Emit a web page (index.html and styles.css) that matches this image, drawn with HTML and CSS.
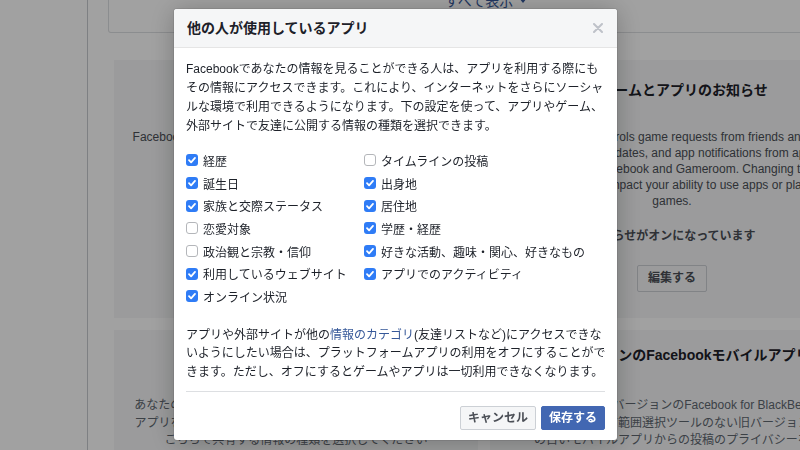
FILE: index.html
```html
<!DOCTYPE html>
<html lang="ja">
<head>
<meta charset="utf-8">
<title>他の人が使用しているアプリ</title>
<link rel="stylesheet" href="styles.css">
</head>
<body>
<div class="page">
  <aside class="sidebar"></aside>
  <main class="main">
    <div class="topbox">
      <a class="showall" href="#">すべて表示
        <svg class="caret" width="8" height="6" viewBox="0 0 8 6"><path d="M0 0h8L4 5z" fill="currentColor"/></svg>
      </a>
    </div>
    <div class="grid">
      <section class="card">
        <h2 class="card-title">
          <svg class="card-icon" width="18" height="18" viewBox="0 0 24 24"><path fill="currentColor" d="M19.14 12.94c.04-.3.06-.61.06-.94 0-.32-.02-.64-.07-.94l2.030-1.58a.49.49 0 0 0 .12-.61l-1.92-3.32a.49.49 0 0 0-.59-.22l-2.39.96c-.5-.38-1.03-.7-1.62-.94l-.36-2.54a.48.48 0 0 0-.48-.41h-3.84c-.24 0-.43.17-.47.41l-.36 2.54c-.59.24-1.13.57-1.62.94l-2.39-.96c-.22-.08-.47 0-.59.22L2.74 8.87c-.12.21-.08.47.12.61l2.03 1.58c-.05.3-.09.63-.09.94s.02.64.07.94l-2.03 1.58a.49.49 0 0 0-.12.61l1.92 3.32c.12.22.37.29.59.22l2.39-.96c.5.38 1.03.7 1.62.94l.36 2.54c.05.24.24.41.48.41h3.84c.24 0 .44-.17.47-.41l.36-2.54c.59-.24 1.13-.56 1.62-.94l2.39.96c.22.08.47 0 .59-.22l1.92-3.32c.12-.22.07-.47-.12-.61l-2.01-1.58zM12 15.6c-1.98 0-3.6-1.62-3.6-3.6s1.62-3.6 3.6-3.6 3.6 1.62 3.6 3.6-1.62 3.6-3.6 3.6z"/></svg>
          アプリ、ウェブサイト、プラグイン
        </h2>
        <p class="card-text">Facebookを使ってログインしたアプリやウェブサイトです。</p>
      </section>
      <section class="card">
        <h2 class="card-title">
          <svg class="card-icon" width="18" height="18" viewBox="0 0 24 24"><path fill="currentColor" d="M12 22a2 2 0 0 0 2-2h-4a2 2 0 0 0 2 2zm6-6V11c0-3.070-1.64-5.64-4.5-6.32V4a1.5 1.5 0 0 0-3 0v.68C7.63 5.36 6 7.92 6 11v5l-2 2v1h16v-1l-2-2z"/></svg>
          ゲームとアプリのお知らせ
        </h2>
        <p class="card-text">Facebook controls game requests from friends and<br>games, game updates, and app notifications from apps<br>developers on Facebook and Gameroom. Changing these<br>settings may impact your ability to use apps or play<br>games.</p>
        <p class="card-status">お知らせがオンになっています</p>
        <button class="btn btn-edit" type="button">編集する</button>
      </section>
      <section class="card card-lower">
        <h2 class="card-title">他の人が使用しているアプリ</h2>
        <p class="card-text">あなたの友達が利用しているアプリからも、あなたの情報が<br>アプリを利用する人はあなたの情報を見ることができます。<br>こちらで共有する情報の種類を選択してください</p>
      </section>
      <section class="card card-lower">
        <h2 class="card-title">古いバージョンのFacebookモバイルアプリ</h2>
        <p class="card-text">ご利用中の古いバージョンのFacebook for BlackBerry<br>などでは、共有範囲選択ツールのない旧バージョン<br>の古いモバイルアプリからの投稿のプライバシーを</p>
      </section>
    </div>
  </main>
</div>

<div class="overlay"></div>

<div class="dialog" role="dialog">
  <div class="dlg-head">
    <h1 class="dlg-title">他の人が使用しているアプリ</h1>
    <svg class="dlg-close" width="10" height="10" viewBox="0 0 10 10"><path d="M1 1l8 8M9 1L1 9" stroke="#bec2c9" stroke-width="2" stroke-linecap="round"/></svg>
  </div>
  <div class="dlg-body">
    <p class="dlg-text">Facebookであなたの情報を見ることができる人は、アプリを利用する際にもその情報にアクセスできます。これにより、インターネットをさらにソーシャルな環境で利用できるようになります。下の設定を使って、アプリやゲーム、外部サイトで友達に公開する情報の種類を選択できます。</p>
    <div class="opts">
      <div class="opts-col">
        <label class="opt"><span class="cb on"><svg width="12" height="12" viewBox="0 0 12 12"><path d="M3 6.2l2.1 2.1L9 3.9" fill="none" stroke="#fff" stroke-width="1.8" stroke-linecap="round" stroke-linejoin="round"/></svg></span>経歴</label>
        <label class="opt"><span class="cb on"><svg width="12" height="12" viewBox="0 0 12 12"><path d="M3 6.2l2.1 2.1L9 3.9" fill="none" stroke="#fff" stroke-width="1.8" stroke-linecap="round" stroke-linejoin="round"/></svg></span>誕生日</label>
        <label class="opt"><span class="cb on"><svg width="12" height="12" viewBox="0 0 12 12"><path d="M3 6.2l2.1 2.1L9 3.9" fill="none" stroke="#fff" stroke-width="1.8" stroke-linecap="round" stroke-linejoin="round"/></svg></span>家族と交際ステータス</label>
        <label class="opt"><span class="cb off"></span>恋愛対象</label>
        <label class="opt"><span class="cb off"></span>政治観と宗教・信仰</label>
        <label class="opt"><span class="cb on"><svg width="12" height="12" viewBox="0 0 12 12"><path d="M3 6.2l2.1 2.1L9 3.9" fill="none" stroke="#fff" stroke-width="1.8" stroke-linecap="round" stroke-linejoin="round"/></svg></span>利用しているウェブサイト</label>
        <label class="opt"><span class="cb on"><svg width="12" height="12" viewBox="0 0 12 12"><path d="M3 6.2l2.1 2.1L9 3.9" fill="none" stroke="#fff" stroke-width="1.8" stroke-linecap="round" stroke-linejoin="round"/></svg></span>オンライン状況</label>
      </div>
      <div class="opts-col">
        <label class="opt"><span class="cb off"></span>タイムラインの投稿</label>
        <label class="opt"><span class="cb on"><svg width="12" height="12" viewBox="0 0 12 12"><path d="M3 6.2l2.1 2.1L9 3.9" fill="none" stroke="#fff" stroke-width="1.8" stroke-linecap="round" stroke-linejoin="round"/></svg></span>出身地</label>
        <label class="opt"><span class="cb on"><svg width="12" height="12" viewBox="0 0 12 12"><path d="M3 6.2l2.1 2.1L9 3.9" fill="none" stroke="#fff" stroke-width="1.8" stroke-linecap="round" stroke-linejoin="round"/></svg></span>居住地</label>
        <label class="opt"><span class="cb on"><svg width="12" height="12" viewBox="0 0 12 12"><path d="M3 6.2l2.1 2.1L9 3.9" fill="none" stroke="#fff" stroke-width="1.8" stroke-linecap="round" stroke-linejoin="round"/></svg></span>学歴・経歴</label>
        <label class="opt"><span class="cb on"><svg width="12" height="12" viewBox="0 0 12 12"><path d="M3 6.2l2.1 2.1L9 3.9" fill="none" stroke="#fff" stroke-width="1.8" stroke-linecap="round" stroke-linejoin="round"/></svg></span>好きな活動、趣味・関心、好きなもの</label>
        <label class="opt"><span class="cb on"><svg width="12" height="12" viewBox="0 0 12 12"><path d="M3 6.2l2.1 2.1L9 3.9" fill="none" stroke="#fff" stroke-width="1.8" stroke-linecap="round" stroke-linejoin="round"/></svg></span>アプリでのアクティビティ</label>
      </div>
    </div>
    <p class="dlg-note">アプリや外部サイトが他の<a class="link" href="#">情報のカテゴリ</a>(友達リストなど)にアクセスできないようにしたい場合は、プラットフォームアプリの利用をオフにすることができます。ただし、オフにするとゲームやアプリは一切利用できなくなります。</p>
  </div>
  <div class="dlg-foot">
    <button class="btn btn-cancel" type="button">キャンセル</button>
    <button class="btn btn-save" type="button">保存する</button>
  </div>
</div>
</body>
</html>
```

FILE: styles.css
```css
html, body {
  margin: 0;
  height: 100%;
  overflow: hidden;
}

body {
  font-family: "Liberation Sans", "Noto Sans CJK JP", sans-serif;
  font-size: 12px;
  color: #1d2129;
  background: #fff;
}

/* ---------- page behind the dialog ---------- */
.page {
  display: flex;
  height: 450px;
}

.sidebar {
  flex: none;
  width: 87px;
  border-right: 1px solid #c8cbd0;
}

.main {
  flex: none;
  width: 756px;
  margin-left: 20px;
}

.topbox {
  height: 33px;
  box-sizing: border-box;
  border: 1px solid #dddfe2;
  border-top: 0;
  border-radius: 0 0 3px 3px;
  display: flex;
  justify-content: center;
}

.showall {
  margin-top: -7px;
  display: flex;
  align-items: center;
  gap: 6px;
  height: 16px;
  font-size: 14px;
  line-height: 16px;
  color: #365899;
  text-decoration: none;
}

.grid {
  display: grid;
  grid-template-columns: 364px 364px;
  grid-template-rows: 258px 258px;
  gap: 12px;
  margin: 27px 6px 0;
}

.card {
  background: #f5f6f7;
  text-align: center;
  padding: 20px 10px 0;
}

.card-title {
  margin: 0;
  display: flex;
  justify-content: center;
  align-items: center;
  gap: 6px;
  font-size: 14px;
  line-height: 20px;
  font-weight: bold;
  color: #1d2129;
  white-space: nowrap;
}

.card-icon {
  flex: none;
  color: #1d2129;
}

.card-text {
  margin: 29px 0 0;
  font-size: 12px;
  line-height: 16px;
  color: #4b4f56;
  white-space: nowrap;
}

.card-status {
  margin: 19px 0 0;
  font-size: 12px;
  line-height: 16px;
  font-weight: bold;
  color: #4b4f56;
}

.card-lower {
  padding-top: 15px;
}

.card-lower .card-text {
  margin-top: 32px;
  line-height: 17.5px;
  color: #606770;
}

/* ---------- buttons ---------- */
.btn {
  font-family: inherit;
  font-size: 12px;
  font-weight: bold;
  line-height: 22px;
  height: 24px;
  box-sizing: border-box;
  padding: 0 7px;
  border: 1px solid;
  border-radius: 2px;
  cursor: pointer;
}

.btn-edit {
  margin-top: 21px;
  height: 27px;
  line-height: 25px;
  padding: 0 10px;
  background: #f5f6f7;
  border-color: #ccd0d5;
  color: #4b4f56;
}

.btn-cancel {
  background: #f5f6f7;
  border-color: #ccd0d5;
  color: #4b4f56;
}

.btn-save {
  background: #4267b2;
  border-color: #4267b2;
  color: #fff;
}

/* ---------- overlay + dialog ---------- */
.overlay {
  position: fixed;
  inset: 0;
  background: rgba(0, 0, 0, 0.37);
}

.dialog {
  position: fixed;
  left: 174px;
  top: 9px;
  width: 443px;
  background: #fff;
  border-radius: 3px;
  box-shadow: 0 2px 26px rgba(0, 0, 0, 0.25), 0 0 0 1px rgba(0, 0, 0, 0.08);
  overflow: hidden;
}

.dlg-head {
  height: 38px;
  display: flex;
  align-items: center;
  justify-content: space-between;
  padding: 0 13px 0 13px;
  background: #f5f6f7;
  border-bottom: 1px solid #e5e5e5;
}

.dlg-title {
  margin: 0;
  font-size: 14px;
  line-height: 18px;
  font-weight: bold;
  color: #1d2129;
}

.dlg-close {
  flex: none;
  margin-right: 1px;
}

.dlg-body {
  padding: 12px 10px 0 12px;
}

.dlg-text {
  margin: 0;
  line-height: 19px;
}

.opts {
  display: flex;
  margin-top: 13px;
}

.opts-col {
  width: 178px;
  flex: none;
}

.opt {
  display: flex;
  align-items: center;
  gap: 5px;
  height: 22.7px;
  white-space: nowrap;
}

.cb {
  flex: none;
  width: 12px;
  height: 12px;
  box-sizing: border-box;
  border-radius: 3px;
  display: flex;
  align-items: center;
  justify-content: center;
}

.cb.on {
  background: #2f7cf6;
}

.cb.off {
  background: #fff;
  border: 1px solid #b4b6ba;
}

.dlg-note {
  margin: 18px 0 0;
  line-height: 18.5px;
}

.link {
  color: #365899;
  text-decoration: none;
}

.dlg-foot {
  margin: 10px 12px 0;
  border-top: 1px solid #dddfe2;
  padding: 14px 0 10px;
  display: flex;
  justify-content: flex-end;
  gap: 5px;
}
```
